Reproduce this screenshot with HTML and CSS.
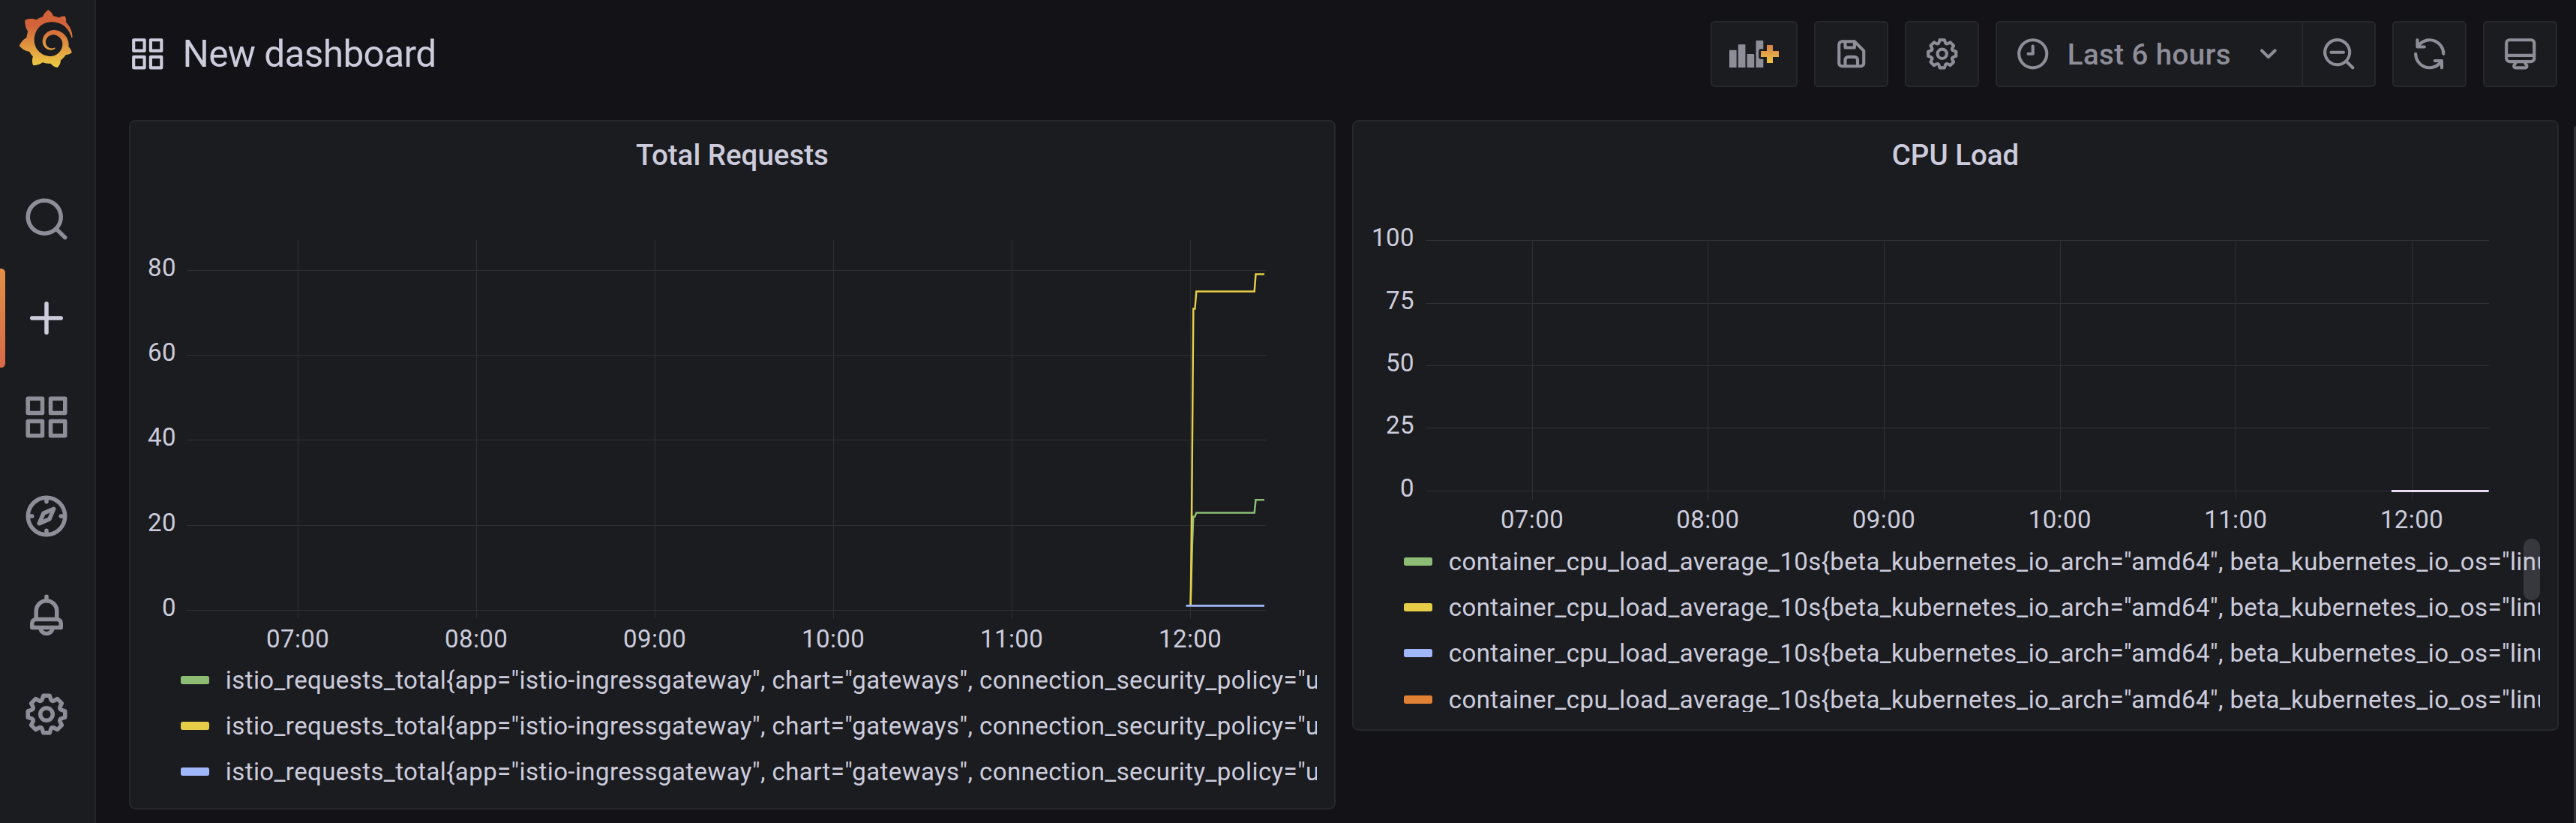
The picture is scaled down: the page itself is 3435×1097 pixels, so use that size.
FILE: index.html
```html
<!DOCTYPE html>
<html lang="en">
<head>
<meta charset="utf-8">
<title>New dashboard</title>
<link rel="stylesheet" href="styles.css">
</head>
<body>
<svg class="defs" aria-hidden="true">
  <symbol id="i-apps" viewBox="0 0 24 24"><path d="M10,13H3a1,1,0,0,0-1,1v7a1,1,0,0,0,1,1h7a1,1,0,0,0,1-1V14A1,1,0,0,0,10,13ZM9,20H4V15H9ZM21,2H14a1,1,0,0,0-1,1v7a1,1,0,0,0,1,1h7a1,1,0,0,0,1-1V3A1,1,0,0,0,21,2ZM20,9H15V4h5Zm1,4H14a1,1,0,0,0-1,1v7a1,1,0,0,0,1,1h7a1,1,0,0,0,1-1V14A1,1,0,0,0,21,13Zm-1,7H15V15h5ZM10,2H3A1,1,0,0,0,2,3v7a1,1,0,0,0,1,1h7a1,1,0,0,0,1-1V3A1,1,0,0,0,10,2ZM9,9H4V4H9Z"/></symbol>
  <symbol id="i-cog" viewBox="0 0 24 24"><path d="M21.32,9.55l-1.89-.63.89-1.78A1,1,0,0,0,20.13,6L18,3.87a1,1,0,0,0-1.15-.19l-1.78.89-.63-1.89A1,1,0,0,0,13.5,2h-3a1,1,0,0,0-.95.68L8.92,4.57,7.14,3.68A1,1,0,0,0,6,3.87L3.87,6a1,1,0,0,0-.19,1.15l.89,1.78-1.89.63A1,1,0,0,0,2,10.5v3a1,1,0,0,0,.68.95l1.89.63-.89,1.78A1,1,0,0,0,3.87,18L6,20.13a1,1,0,0,0,1.15.19l1.78-.89.63,1.89a1,1,0,0,0,.95.68h3a1,1,0,0,0,.95-.68l.63-1.89,1.78.89A1,1,0,0,0,18,20.13L20.13,18a1,1,0,0,0,.19-1.15l-.89-1.78,1.89-.63A1,1,0,0,0,22,13.5v-3A1,1,0,0,0,21.32,9.55ZM20,12.78l-1.2.4A2,2,0,0,0,17.64,16l.57,1.14-1.1,1.1L16,17.64a2,2,0,0,0-2.79,1.16l-.4,1.2H11.22l-.4-1.2A2,2,0,0,0,8,17.64l-1.14.57-1.1-1.1L6.36,16A2,2,0,0,0,5.2,13.18L4,12.78V11.22l1.2-.4A2,2,0,0,0,6.36,8L5.79,6.89l1.1-1.1L8,6.36A2,2,0,0,0,10.82,5.2l.4-1.2h1.56l.4,1.2A2,2,0,0,0,16,6.36l1.14-.57,1.1,1.1L17.64,8a2,2,0,0,0,1.16,2.79l1.2.4ZM12,8a4,4,0,1,0,4,4A4,4,0,0,0,12,8Zm0,6a2,2,0,1,1,2-2A2,2,0,0,1,12,14Z"/></symbol>
</svg>
<div class="app">
  <nav class="sidebar">
    <a class="logo">
      <svg viewBox="0 0 351 365">
        <defs><linearGradient id="flame" gradientUnits="userSpaceOnUse" x1="175" y1="357" x2="175" y2="100"><stop offset="0" stop-color="#edcb45"/><stop offset="1" stop-color="#d2623a"/></linearGradient></defs>
        <path fill="url(#flame)" d="M342,161.2c-0.6-6.1-1.6-13.1-3.6-20.9c-2-7.7-5-16.2-9.4-25c-4.4-8.8-10.1-17.9-17.5-26.8c-2.9-3.5-6.1-6.9-9.5-10.2c5.1-20.3-6.2-37.9-6.2-37.9c-19.5-1.2-31.9,6.1-36.5,9.4c-0.8-0.3-1.5-0.7-2.3-1c-3.3-1.3-6.7-2.6-10.3-3.7c-3.5-1.1-7.1-2.1-10.8-3c-3.7-0.9-7.4-1.6-11.2-2.2c-0.7-0.1-1.3-0.2-2-0.3c-8.5-27.2-32.9-38.6-32.9-38.6c-27.3,17.3-32.4,41.5-32.4,41.5s-0.1,0.5-0.3,1.4c-1.5,0.4-3,0.9-4.5,1.3c-2.1,0.6-4.2,1.4-6.2,2.2c-2.1,0.8-4.1,1.6-6.2,2.5c-4.1,1.8-8.2,3.8-12.2,6c-3.9,2.2-7.7,4.6-11.4,7.1c-0.5-0.2-1-0.4-1-0.4c-37.8-14.4-71.3,2.9-71.3,2.9c-3.1,40.2,15.1,65.5,18.7,70.1c-0.9,2.5-1.7,5-2.5,7.5c-2.8,9.1-4.9,18.4-6.2,28.1c-0.2,1.4-0.4,2.8-0.5,4.2C18.8,192.7,8.5,228,8.5,228c29.1,33.5,63.1,35.6,63.1,35.6c0,0,0.1-0.1,0.1-0.1c4.3,7.7,9.3,15,14.9,21.9c2.4,2.9,4.8,5.6,7.4,8.3c-10.6,30.4,1.5,55.6,1.5,55.6c32.4,1.2,53.7-14.2,58.2-17.7c3.2,1.1,6.5,2.1,9.8,2.9c10,2.6,20.2,4.1,30.4,4.5c2.5,0.1,5.1,0.2,7.6,0.1l1.2,0l0.8,0l1.6,0l1.6-0.1l0,0.1c15.3,21.8,42.1,24.9,42.1,24.9c19.1-20.1,20.2-40.1,20.2-44.4l0,0c0,0,0-0.1,0-0.3c0-0.4,0-0.6,0-0.6l0,0c0-0.3,0-0.6,0-0.9c4-2.8,7.8-5.8,11.4-9.1c7.6-6.9,14.3-14.8,19.9-23.3c0.5-0.8,1-1.6,1.5-2.4c21.6,1.2,36.9-13.4,36.9-13.4c-3.6-22.5-16.4-33.5-19.1-35.6l0,0c0,0-0.1-0.1-0.3-0.2c-0.2-0.1-0.2-0.2-0.2-0.2c0,0,0,0,0,0c-0.1-0.1-0.3-0.2-0.5-0.3c0.1-1.4,0.2-2.7,0.3-4.1c0.2-2.4,0.2-4.9,0.2-7.3l0-1.8l0-0.9l0-0.5c0-0.6,0-0.4,0-0.6l-0.1-1.5l-0.1-2c0-0.7-0.1-1.3-0.2-1.9c-0.1-0.6-0.1-1.3-0.2-1.9l-0.2-1.9l-0.3-1.9c-0.4-2.5-0.8-4.9-1.4-7.4c-2.3-9.7-6.1-18.9-11-27.2c-5-8.3-11.2-15.6-18.3-21.8c-7-6.2-14.9-11.2-23.1-14.9c-8.3-3.7-16.9-6.1-25.5-7.2c-4.3-0.6-8.6-0.8-12.9-0.7l-1.6,0l-0.4,0c-0.1,0-0.6,0-0.5,0l-0.7,0l-1.6,0.1c-0.6,0-1.2,0.1-1.7,0.1c-2.2,0.2-4.4,0.5-6.5,0.9c-8.6,1.6-16.7,4.7-23.8,9c-7.1,4.3-13.3,9.6-18.3,15.6c-5,6-8.9,12.7-11.6,19.6c-2.7,6.9-4.2,14.1-4.6,21c-0.1,1.7-0.1,3.5-0.1,5.2c0,0.4,0,0.9,0,1.3l0.1,1.4c0.1,0.8,0.1,1.7,0.2,2.5c0.3,3.5,1,6.9,1.9,10.1c1.9,6.5,4.9,12.4,8.6,17.4c3.7,5,8.2,9.1,12.9,12.4c4.7,3.2,9.8,5.5,14.8,7c5,1.5,10,2.1,14.7,2.1c0.6,0,1.2,0,1.7,0c0.3,0,0.6,0,0.9,0c0.3,0,0.6,0,0.9-0.1c0.5,0,1-0.1,1.5-0.1c0.1,0,0.3,0,0.4-0.1l0.5-0.1c0.3,0,0.6-0.1,0.9-0.1c0.6-0.1,1.1-0.2,1.7-0.3c0.6-0.1,1.1-0.2,1.6-0.4c1.1-0.2,2.1-0.6,3.1-0.9c2-0.7,4-1.5,5.7-2.4c1.8-0.9,3.4-2,5-3c0.4-0.3,0.9-0.6,1.3-1c1.6-1.3,1.9-3.7,0.6-5.3c-1.1-1.4-3.1-1.8-4.7-0.9c-0.4,0.2-0.8,0.4-1.2,0.6c-1.4,0.7-2.8,1.3-4.3,1.8c-1.5,0.5-3.1,0.9-4.7,1.2c-0.8,0.1-1.6,0.2-2.5,0.3c-0.4,0-0.8,0.1-1.3,0.1c-0.4,0-0.9,0-1.2,0c-0.4,0-0.8,0-1.2,0c-0.5,0-1,0-1.5-0.1c0,0-0.3,0-0.1,0l-0.2,0l-0.3,0c-0.2,0-0.5,0-0.7-0.1c-0.5-0.1-0.9-0.1-1.4-0.2c-3.7-0.5-7.4-1.6-10.9-3.2c-3.6-1.6-7-3.8-10.1-6.6c-3.1-2.8-5.8-6.1-7.9-9.9c-2.1-3.8-3.6-8-4.3-12.4c-0.3-2.2-0.5-4.5-0.4-6.7c0-0.6,0.1-1.2,0.1-1.8c0,0.2,0-0.1,0-0.1l0-0.2l0-0.5c0-0.3,0.1-0.6,0.1-0.9c0.1-1.2,0.3-2.4,0.5-3.6c1.7-9.6,6.5-19,13.9-26.1c1.9-1.8,3.9-3.4,6-4.9c2.1-1.5,4.4-2.8,6.8-3.9c2.4-1.1,4.8-2,7.4-2.7c2.5-0.7,5.1-1.1,7.8-1.4c1.3-0.1,2.6-0.2,4-0.2c0.4,0,0.6,0,0.9,0l1.1,0l0.7,0c0.3,0,0,0,0.1,0l0.3,0l1.1,0.1c2.9,0.2,5.7,0.6,8.5,1.3c5.6,1.2,11.1,3.3,16.2,6.1c10.2,5.7,18.9,14.5,24.2,25.1c2.7,5.3,4.6,11,5.5,16.9c0.2,1.5,0.4,3,0.5,4.5l0.1,1.1l0.1,1.1c0,0.4,0,0.8,0,1.1c0,0.4,0,0.8,0,1.1l0,1l0,1.1c0,0.7-0.1,1.9-0.1,2.6c-0.1,1.6-0.3,3.3-0.5,4.9c-0.2,1.6-0.5,3.2-0.8,4.8c-0.3,1.6-0.7,3.2-1.1,4.7c-0.8,3.1-1.8,6.2-3,9.3c-2.4,6-5.6,11.8-9.4,17.1c-7.7,10.6-18.2,19.2-30.2,24.7c-6,2.7-12.3,4.7-18.8,5.7c-3.2,0.6-6.5,0.9-9.8,1l-0.6,0l-0.5,0l-1.1,0l-1.6,0l-0.8,0c0.4,0-0.1,0-0.1,0l-0.3,0c-1.8,0-3.5-0.1-5.3-0.3c-7-0.5-13.9-1.8-20.7-3.7c-6.7-1.9-13.2-4.6-19.4-7.8c-12.3-6.6-23.4-15.6-32-26.5c-4.3-5.4-8.1-11.3-11.2-17.4c-3.1-6.1-5.6-12.6-7.4-19.1c-1.8-6.6-2.9-13.3-3.4-20.1l-0.1-1.3l0-0.3l0-0.3l0-0.6l0-1.1l0-0.3l0-0.4l0-0.8l0-1.6l0-0.3c0,0,0,0.1,0-0.1l0-0.6c0-0.8,0-1.7,0-2.5c0.1-3.3,0.4-6.8,0.8-10.2c0.4-3.4,1-6.9,1.7-10.3c0.7-3.4,1.5-6.8,2.5-10.2c1.9-6.7,4.3-13.2,7.1-19.3c5.7-12.2,13.1-23.1,22-31.8c2.2-2.2,4.5-4.2,6.9-6.2c2.4-1.9,4.9-3.7,7.5-5.4c2.5-1.7,5.2-3.2,7.9-4.6c1.3-0.7,2.7-1.4,4.1-2c0.7-0.3,1.4-0.6,2.1-0.9c0.7-0.3,1.4-0.6,2.1-0.9c2.8-1.2,5.7-2.2,8.7-3.1c0.7-0.2,1.5-0.4,2.2-0.7c0.7-0.2,1.5-0.4,2.2-0.6c1.5-0.4,3-0.8,4.5-1.1c0.7-0.2,1.5-0.3,2.3-0.5c0.8-0.2,1.5-0.3,2.3-0.5c0.8-0.1,1.5-0.3,2.3-0.4l1.1-0.2l1.2-0.2c0.8-0.1,1.5-0.2,2.3-0.3c0.9-0.1,1.7-0.2,2.6-0.3c0.7-0.1,1.9-0.2,2.6-0.3c0.5-0.1,1.1-0.1,1.6-0.2l1.1-0.1l0.5-0.1l0.6,0c0.9-0.1,1.7-0.1,2.6-0.2l1.3-0.1c0,0,0.5,0,0.1,0l0.3,0l0.6,0c0.7,0,1.5-0.1,2.2-0.1c2.9-0.1,5.9-0.1,8.8,0c5.8,0.2,11.5,0.9,17,1.9c11.1,2.1,21.5,5.6,31,10.3c9.5,4.6,17.9,10.3,25.3,16.5c0.5,0.4,0.9,0.8,1.4,1.2c0.4,0.4,0.9,0.8,1.3,1.2c0.9,0.8,1.7,1.6,2.6,2.4c0.9,0.8,1.7,1.6,2.5,2.4c0.8,0.8,1.6,1.6,2.4,2.5c3.1,3.3,6,6.6,8.6,10c5.2,6.7,9.4,13.5,12.7,19.9c0.2,0.4,0.4,0.8,0.6,1.2c0.2,0.4,0.4,0.8,0.6,1.2c0.4,0.8,0.8,1.6,1.1,2.4c0.4,0.8,0.7,1.5,1.1,2.3c0.3,0.8,0.7,1.5,1,2.3c1.2,3,2.4,5.9,3.3,8.6c1.5,4.4,2.6,8.3,3.5,11.7c0.3,1.4,1.6,2.3,3,2.1c1.5-0.1,2.6-1.3,2.6-2.8C342.6,170.4,342.5,166.1,342,161.2z"/>
      </svg>
    </a>
    <a class="nav-item"><svg class="icon-xl" viewBox="0 0 24 24"><path d="M21.71,20.29,18,16.61A9,9,0,1,0,16.61,18l3.68,3.68a1,1,0,0,0,1.42,0A1,1,0,0,0,21.71,20.29ZM11,18a7,7,0,1,1,7-7A7,7,0,0,1,11,18Z"/></svg></a>
    <a class="nav-item active"><svg class="icon-xl" viewBox="0 0 24 24"><path d="M19,11H13V5a1,1,0,0,0-2,0v6H5a1,1,0,0,0,0,2h6v6a1,1,0,0,0,2,0V13h6a1,1,0,0,0,0-2Z"/></svg></a>
    <a class="nav-item"><svg class="icon-xl"><use href="#i-apps"/></svg></a>
    <a class="nav-item"><svg class="icon-xl" viewBox="0 0 24 24"><path d="M12,2A10,10,0,1,0,22,12,10,10,0,0,0,12,2Zm1,17.93V19a1,1,0,0,0-2,0v.93A8,8,0,0,1,4.07,13H5a1,1,0,0,0,0-2H4.07A8,8,0,0,1,11,4.07V5a1,1,0,0,0,2,0V4.07A8,8,0,0,1,19.93,11H19a1,1,0,0,0,0,2h.93A8,8,0,0,1,13,19.93ZM15.14,7.55l-5,2.12a1,1,0,0,0-.52.52l-2.12,5a1,1,0,0,0,.21,1.1,1,1,0,0,0,.7.3.93.93,0,0,0,.4-.09l5-2.12a1,1,0,0,0,.52-.52l2.12-5a1,1,0,0,0-1.31-1.31Zm-2.49,5.1-2.28,1,1-2.28,2.28-1Z"/></svg></a>
    <a class="nav-item"><svg class="icon-xl" viewBox="0 0 24 24"><path d="M18,13.18V10a6,6,0,0,0-5-5.91V3a1,1,0,0,0-2,0V4.09A6,6,0,0,0,6,10v3.18A3,3,0,0,0,4,16v2a1,1,0,0,0,1,1H8.14a4,4,0,0,0,7.72,0H19a1,1,0,0,0,1-1V16A3,3,0,0,0,18,13.18ZM8,10a4,4,0,0,1,8,0v3H8Zm4,10a2,2,0,0,1-1.72-1h3.44A2,2,0,0,1,12,20Zm6-3H6V16a1,1,0,0,1,1-1H17a1,1,0,0,1,1,1Z"/></svg></a>
    <a class="nav-item"><svg class="icon-xl"><use href="#i-cog"/></svg></a>
  </nav>

  <main class="page">
    <header class="toolbar">
      <svg class="icon-lg title-icon"><use href="#i-apps"/></svg>
      <h1 class="page-title">New dashboard</h1>
      <div class="actions">
        <button class="btn btn-add">
          <svg class="add-icon" viewBox="0 0 68 36">
            <defs><linearGradient id="plus" x1="0" y1="0" x2="0" y2="1"><stop offset="0" stop-color="#d8804a"/><stop offset="1" stop-color="#ecc644"/></linearGradient></defs>
            <path d="M0.8,12.7h8a.8,.8,0,0,1,.8,.8V36H0V13.5a.8,.8,0,0,1,.8-.8ZM12.6,5.3h8a.8,.8,0,0,1,.8,.8V36H11.8V6.1a.8,.8,0,0,1,.8-.8ZM24.4,18h8a.8,.8,0,0,1,.8,.8V36H23.6V18.8a.8,.8,0,0,1,.8-.8ZM36.3,0h8.2a.8,.8,0,0,1,.8,.8V11.3H42a2.8,2.8,0,0,0-2.8,2.8V22a2.8,2.8,0,0,0,2.8,2.8H45.3V36H35.5V.8a.8,.8,0,0,1,.8-.8Z"/>
            <path fill="url(#plus)" d="M50,6h8v8h8v8h-8v8h-8v-8h-8v-8h8z"/>
          </svg>
        </button>
        <button class="btn"><svg class="icon-lg" viewBox="0 0 24 24"><path d="m20.71 9.29-6-6a1 1 0 0 0-.32-.21A1.09 1.09 0 0 0 14 3H6a3 3 0 0 0-3 3v12a3 3 0 0 0 3 3h12a3 3 0 0 0 3-3v-8a1 1 0 0 0-.29-.71ZM9 5h4v2H9Zm6 14H9v-3a1 1 0 0 1 1-1h4a1 1 0 0 1 1 1Zm4-1a1 1 0 0 1-1 1h-1v-3a3 3 0 0 0-3-3h-4a3 3 0 0 0-3 3v3H6a1 1 0 0 1-1-1V6a1 1 0 0 1 1-1h1v3a1 1 0 0 0 1 1h6a1 1 0 0 0 1-1V6.41l4 4Z"/></svg></button>
        <button class="btn"><svg class="icon-lg"><use href="#i-cog"/></svg></button>
        <div class="btn-group">
          <button class="btn btn-time">
            <svg class="icon-lg" viewBox="0 0 24 24"><path d="M12,6a1,1,0,0,0-1,1v4H9a1,1,0,0,0,0,2h3a1,1,0,0,0,1-1V7A1,1,0,0,0,12,6Zm0-4A10,10,0,1,0,22,12,10,10,0,0,0,12,2Zm0,18a8,8,0,1,1,8-8A8,8,0,0,1,12,20Z"/></svg>
            <span class="time-label">Last 6 hours</span>
            <svg class="icon-lg" viewBox="0 0 24 24"><path d="M17,9.17a1,1,0,0,0-1.41,0L12,12.71,8.46,9.17a1,1,0,0,0-1.41,0,1,1,0,0,0,0,1.42l4.24,4.24a1,1,0,0,0,1.42,0L17,10.59A1,1,0,0,0,17,9.17Z"/></svg>
          </button>
          <button class="btn btn-zoom"><svg class="icon-lg" viewBox="0 0 24 24"><path d="M21.71,20.29,18,16.61A9,9,0,1,0,16.61,18l3.68,3.68a1,1,0,0,0,1.42,0A1,1,0,0,0,21.71,20.29ZM11,18a7,7,0,1,1,7-7A7,7,0,0,1,11,18Zm4-8H7a1,1,0,0,0,0,2h8a1,1,0,0,0,0-2Z"/></svg></button>
        </div>
        <button class="btn"><svg class="icon-lg" viewBox="0 0 24 24"><path d="M19.91,15.51H15.38a1,1,0,0,0,0,2h2.4A8,8,0,0,1,4,12a1,1,0,1,0-2,0,10,10,0,0,0,16.88,7.23V21a1,1,0,0,0,2,0V16.5A1,1,0,0,0,19.91,15.51ZM12,2A10,10,0,0,0,5.12,4.77V3a1,1,0,0,0-2,0V7.5a1,1,0,0,0,1,1h4.5a1,1,0,0,0,0-2H6.22A8,8,0,0,1,20,12a1,1,0,0,0,2,0A10,10,0,0,0,12,2Z"/></svg></button>
        <button class="btn"><svg class="icon-lg" viewBox="0 0 24 24"><path d="M19,2H5A3,3,0,0,0,2,5V15a3,3,0,0,0,3,3H7.64l-.58,1a2,2,0,0,0,0,2,2,2,0,0,0,1.75,1h6.46A2,2,0,0,0,17,21a2,2,0,0,0,0-2l-.59-1H19a3,3,0,0,0,3-3V5A3,3,0,0,0,19,2ZM8.77,20,10,18H14l1.2,2ZM20,15a1,1,0,0,1-1,1H5a1,1,0,0,1-1-1V14H20Zm0-3H4V5A1,1,0,0,1,5,4H19a1,1,0,0,1,1,1Z"/></svg></button>
      </div>
    </header>

    <div class="grid">
      <section class="panel panel-requests">
        <h2 class="panel-title">Total Requests</h2>
        <svg class="chart" viewBox="174 252 1605 624">
          <path class="gridlines" d="M249,360.5H1688M249,473.5H1688M249,586.5H1688M249,700.5H1688M249,813.5H1688M397.5,320V824M635.5,320V824M873.5,320V824M1111.5,320V824M1349.5,320V824M1587.5,320V824"/>
          <g class="ticks-y">
            <text x="235" y="368">80</text><text x="235" y="481">60</text><text x="235" y="594">40</text><text x="235" y="707.5">20</text><text x="235" y="820.5">0</text>
          </g>
          <g class="ticks-x">
            <text x="397.1" y="863">07:00</text><text x="635.1" y="863">08:00</text><text x="873.1" y="863">09:00</text><text x="1111.1" y="863">10:00</text><text x="1349.1" y="863">11:00</text><text x="1587.1" y="863">12:00</text>
          </g>
          <polyline class="series green" points="1587.5,807.6 1590,722 1591.3,688.6 1593.4,688.6 1595.3,683.6 1672.7,683.6 1674.5,666.3 1686,666.3"/>
          <polyline class="series yellow" points="1587.7,807.6 1589,700 1591.3,411.5 1593.4,411.5 1595.3,388.4 1672.7,388.4 1674.5,365.6 1686,365.6"/>
          <path class="series blue" d="M1581.5,807.3H1686"/>
        </svg>
        <ul class="legend">
          <li><i class="swatch sw-green"></i>istio_requests_total{app="istio-ingressgateway", chart="gateways", connection_security_policy="u</li>
          <li><i class="swatch sw-yellow"></i>istio_requests_total{app="istio-ingressgateway", chart="gateways", connection_security_policy="u</li>
          <li><i class="swatch sw-blue"></i>istio_requests_total{app="istio-ingressgateway", chart="gateways", connection_security_policy="u</li>
        </ul>
      </section>

      <section class="panel panel-cpu">
        <h2 class="panel-title">CPU Load</h2>
        <svg class="chart" viewBox="1805 252 1605 466">
          <path class="gridlines" d="M1900.5,320.5H3319M1900.5,404.5H3319M1900.5,487.5H3319M1900.5,570.5H3319M1900.5,654.5H3319M2043.5,320V665.5M2277.5,320V665.5M2512.5,320V665.5M2747.5,320V665.5M2981.5,320V665.5M3216.5,320V665.5"/>
          <g class="ticks-y">
            <text x="1886" y="328">100</text><text x="1886" y="411.6">75</text><text x="1886" y="495">50</text><text x="1886" y="578">25</text><text x="1886" y="661.7">0</text>
          </g>
          <g class="ticks-x">
            <text x="2043" y="704">07:00</text><text x="2277.4" y="704">08:00</text><text x="2512" y="704">09:00</text><text x="2746.8" y="704">10:00</text><text x="2981.3" y="704">11:00</text><text x="3216" y="704">12:00</text>
          </g>
          <path class="series pink" d="M3189,654.6H3318.7"/>
        </svg>
        <ul class="legend">
          <li><i class="swatch sw-green"></i>container_cpu_load_average_10s{beta_kubernetes_io_arch="amd64", beta_kubernetes_io_os="linu</li>
          <li><i class="swatch sw-yellow"></i>container_cpu_load_average_10s{beta_kubernetes_io_arch="amd64", beta_kubernetes_io_os="linu</li>
          <li><i class="swatch sw-blue"></i>container_cpu_load_average_10s{beta_kubernetes_io_arch="amd64", beta_kubernetes_io_os="linu</li>
          <li><i class="swatch sw-orange"></i>container_cpu_load_average_10s{beta_kubernetes_io_arch="amd64", beta_kubernetes_io_os="linu</li>
          <li class="legend-thumb" aria-hidden="true"></li>
        </ul>
      </section>
    </div>
  </main>
  <span class="page-thumb"></span>
</div>
</body>
</html>
```
FILE: styles.css
```css
* { box-sizing: border-box; margin: 0; padding: 0; }

body {
  width: 3435px;
  height: 1097px;
  overflow: hidden;
  background: #121217;
  color: #ccccdc;
  font: 400 33px Roboto, sans-serif;
  letter-spacing: 0.4125px;
}

svg { display: block; fill: currentColor; flex: none; }
.defs { display: none; }
.icon-lg { width: 49.5px; height: 49.5px; }
.icon-xl { width: 66px; height: 66px; }

.app { position: relative; display: flex; height: 1097px; }

/* Sidebar */
.sidebar {
  flex: none;
  width: 128px;
  background: #1b1c20;
  border-right: 2px solid #242529;
  color: #8e8e99;
}
.logo { display: block; height: 226px; padding: 12.6px 0 0 23.5px; }
.logo svg { width: 74.3px; height: 77.3px; }
.nav-item {
  position: relative;
  display: flex;
  align-items: center;
  height: 132px;
  padding-left: 29px;
}
.nav-item.active { color: #ccccdc; }
.nav-item.active::before {
  content: "";
  position: absolute;
  left: 0;
  top: 0;
  width: 7px;
  height: 132px;
  border-radius: 0 5.5px 5.5px 0;
  background: linear-gradient(#e38f46, #d76a47);
}

/* Top toolbar */
.page { flex: 1; min-width: 0; padding-left: 44px; }
.toolbar {
  display: flex;
  align-items: center;
  height: 160px;
  padding: 0 25px 16px 0;
}
.page-title {
  margin-left: 22px;
  font-size: 49.5px;
  font-weight: 400;
  letter-spacing: -0.6px;
}
.actions { display: flex; gap: 22px; margin-left: auto; }
.btn {
  display: flex;
  align-items: center;
  justify-content: center;
  width: 99px;
  height: 88px;
  border: 2px solid #26272b;
  border-radius: 5.5px;
  background: #1b1c20;
  color: #8e8e99;
  font: 500 38.5px Roboto, sans-serif;
  letter-spacing: 0.4125px;
}
.btn-add { width: 116px; padding-left: 2px; }
.add-icon { width: 68px; height: 36px; }
.btn-group { display: flex; }
.btn-time {
  width: 410px;
  justify-content: flex-start;
  padding-left: 22.7px;
  border-radius: 5.5px 0 0 5.5px;
}
.time-label {
  flex: none;
  width: 243.5px;
  margin-left: 21.5px;
  text-align: left;
  white-space: nowrap;
}
.btn-zoom { width: 97px; border-left: 0; border-radius: 0 5.5px 5.5px 0; }

/* Panels */
.grid { display: flex; align-items: flex-start; gap: 22px; }
.panel {
  width: 1609px;
  border: 2px solid #26272b;
  border-radius: 8.25px;
  background: #1b1c20;
}
.panel-requests { height: 919px; }
.panel-cpu { height: 814px; }
.panel-title {
  height: 90px;
  line-height: 90px;
  text-align: center;
  font-size: 38.5px;
  font-weight: 500;
  letter-spacing: 0;
}
.chart { width: 1605px; }
.panel-requests .chart { height: 624px; }
.panel-cpu .chart { height: 466px; }
.gridlines { fill: none; stroke: #2f3034; stroke-width: 1; shape-rendering: crispEdges; }
.ticks-y { text-anchor: end; }
.ticks-x { text-anchor: middle; }
.series { fill: none; stroke-width: 2.5; }
.green { stroke: #8dbd75; }
.yellow { stroke: #e5cd47; }
.blue { stroke: #a0b7fb; stroke-width: 2.75; }
.pink { stroke: #eedcf3; stroke-width: 3; }

.legend {
  position: relative;
  margin: 0 23px 0 67px;
  overflow: hidden;
  list-style: none;
}
.panel-cpu .legend { height: 231px; }
.legend li {
  display: flex;
  align-items: center;
  height: 61.2px;
  white-space: nowrap;
}
.swatch { flex: none; width: 38px; height: 11px; margin-right: 21.8px; border-radius: 2.75px; }
.sw-green { background: #8dbd75; }
.sw-yellow { background: #e5cd47; }
.sw-blue { background: #a0b7fb; }
.sw-orange { background: #e08134; }

/* Scroll thumbs overlay the content they belong to */
.legend .legend-thumb {
  position: absolute;
  top: 0;
  right: 0;
  width: 22px;
  height: 82px;
  border-radius: 11px;
  background: rgba(204, 204, 220, 0.16);
}
.page-thumb {
  position: absolute;
  top: 168px;
  right: 0;
  width: 3px;
  height: 929px;
  border-top-left-radius: 3px;
  background: #313136;
}
```
